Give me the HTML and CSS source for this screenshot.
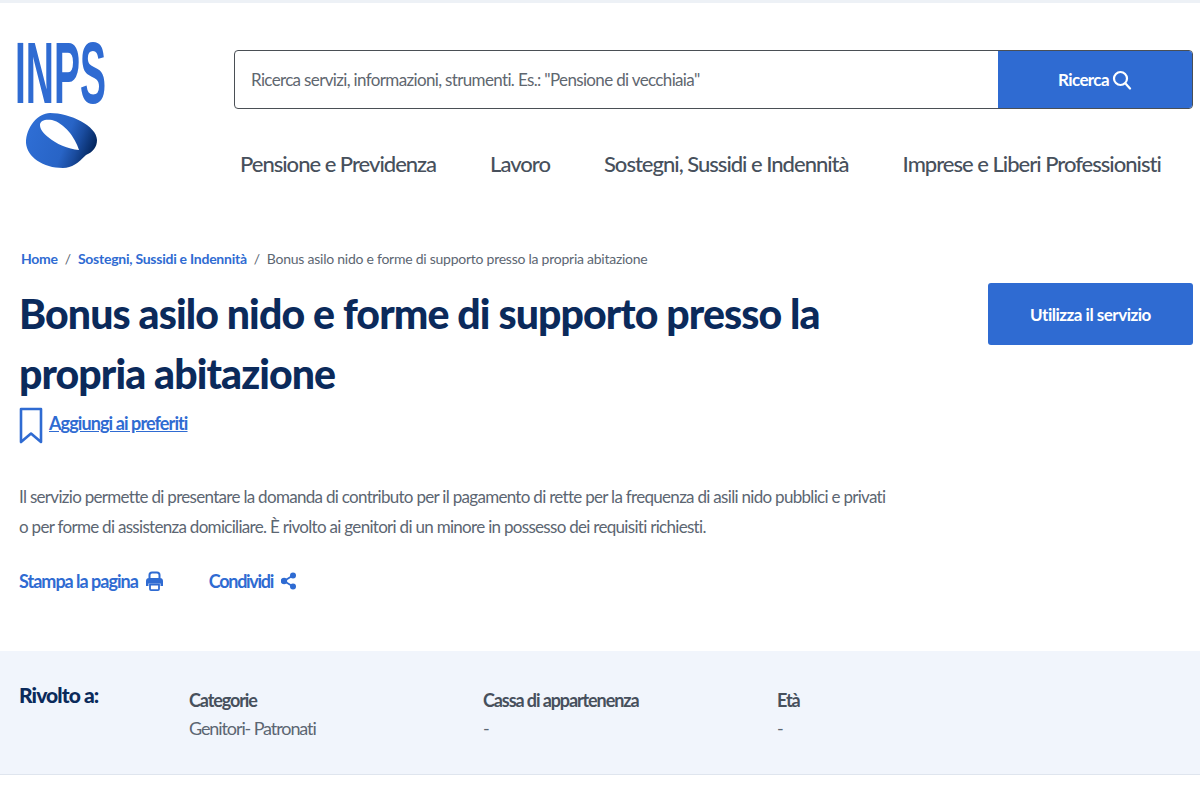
FILE: index.html
```html
<!DOCTYPE html>
<html lang="it">
<head>
    <meta charset="UTF-8">
    <title>Bonus asilo nido e forme di supporto presso la propria abitazione</title>
    <link rel="stylesheet" href="styles.css">
</head>
<body>

    <!-- Header -->
    <header class="header">
        <div class="logo">
            <svg class="logo-word" width="90" height="62" viewBox="0 0 90 62">
                <text x="-2" y="60" textLength="91" lengthAdjust="spacingAndGlyphs">INPS</text>
            </svg>
            <svg class="logo-mark" width="72" height="56" viewBox="0 0 72 56">
                <defs>
                    <linearGradient id="ringFill" x1="0" y1="0.2" x2="1" y2="0.5">
                        <stop offset="0" stop-color="#2f6fd6"/>
                        <stop offset="0.6" stop-color="#2864c6"/>
                        <stop offset="0.78" stop-color="#1a4c9f"/>
                        <stop offset="1" stop-color="#04275f"/>
                    </linearGradient>
                </defs>
                <path fill="url(#ringFill)" fill-rule="evenodd" d="M0 30C0 14 12 0 24 0C44 0 71 13 71 27C71 34 67 39 60 42C52 50 46 55 37 55C17 55 1 44 0 30ZM14 12C14 16 17 20 22 24C30 31 42 36 53 37C49 24 38 10 26 7C20 6 14 7 14 12Z"/>
            </svg>
        </div>
        <div class="header-main">
            <form class="search">
                <div class="search-input">Ricerca servizi, informazioni, strumenti. Es.: "Pensione di vecchiaia"</div>
                <div class="search-btn">
                    Ricerca
                    <svg width="20" height="20" viewBox="0 0 20 20" fill="none" stroke="#fff" stroke-width="2.2" stroke-linecap="round"><circle cx="8.500" cy="8.500" r="6.500"/><path d="M13.500 13.500L18 18.500"/></svg>
                </div>
            </form>
            <nav class="nav">
                <a>Pensione e Previdenza</a>
                <a>Lavoro</a>
                <a>Sostegni, Sussidi e Indennità</a>
                <a>Imprese e Liberi Professionisti</a>
            </nav>
        </div>
    </header>

    <!-- Page intro -->
    <main class="intro">
        <div class="breadcrumb">
            <a>Home</a><span class="sep">/</span><a>Sostegni, Sussidi e Indennità</a><span class="sep">/</span><span>Bonus asilo nido e forme di supporto presso la propria abitazione</span>
        </div>
        <div class="title-row">
            <h1>Bonus asilo nido e forme di supporto presso la propria abitazione</h1>
            <a class="use-btn">Utilizza il servizio</a>
        </div>
        <div class="favourite">
            <svg width="24" height="38" viewBox="0 0 24 38" fill="none" stroke="#2f6bd2" stroke-width="2.6" stroke-linejoin="round"><path d="M2 2H22V35L12 26.500L2 35Z"/></svg>
            <a>Aggiungi ai preferiti</a>
        </div>
        <p class="description">Il servizio permette di presentare la domanda di contributo per il pagamento di rette per la frequenza di asili nido pubblici e privati<br>o per forme di assistenza domiciliare. È rivolto ai genitori di un minore in possesso dei requisiti richiesti.</p>
        <div class="actions">
            <a>Stampa la pagina
                <svg width="17" height="21" viewBox="0 0 17 21" fill="#2f6bd2"><path d="M3.500 7V4C3.500 2.500 4.500 1.500 6 1.500H11C12.500 1.500 13.500 2.500 13.500 4V7" fill="none" stroke="#2f6bd2" stroke-width="2"/><path d="M3 7H14C15.800 7 17 8.200 17 10V15H14.500V12.500H2.500V15H0V10C0 8.200 1.200 7 3 7Z"/><path d="M4 13.500H13V18C13 18.800 12.500 19.200 12 19.200H5C4.500 19.200 4 18.800 4 18Z" fill="none" stroke="#2f6bd2" stroke-width="1.800"/></svg>
            </a>
            <a class="share">Condividi
                <svg width="15" height="18" viewBox="0 0 15 18" fill="#2f6bd2" stroke="#2f6bd2"><circle cx="12" cy="3.500" r="3" stroke="none"/><circle cx="3" cy="9" r="3.200" stroke="none"/><circle cx="12" cy="14.500" r="3" stroke="none"/><path d="M12 3.500L3 9L12 14.500" fill="none" stroke-width="1.800"/></svg>
            </a>
        </div>
    </main>

    <!-- Rivolto a -->
    <section class="audience">
        <h2>Rivolto a:</h2>
        <div class="audience-col col-cat">
            <strong>Categorie</strong>
            <span>Genitori- Patronati</span>
        </div>
        <div class="audience-col col-cassa">
            <strong>Cassa di appartenenza</strong>
            <span>-</span>
        </div>
        <div class="audience-col">
            <strong>Età</strong>
            <span>-</span>
        </div>
    </section>

</body>
</html>
```

FILE: styles.css
```css
/* General styles */
body {
    font-family: Lato, 'Noto Sans', sans-serif;
    background-color: #fff;
    color: #5c6672;
    margin: 0;
    height: 800px;
    overflow: hidden;
    border-top: 3px solid #edf1f6;
    box-sizing: border-box;
}

a {
    color: #2f6bd2;
}

/* Header */
.header {
    display: flex;
    padding: 40px 7px 0 17px;
}

.logo {
    width: 217px;
    display: flex;
    flex-direction: column;
}

.logo-word {
    font-family: 'Liberation Sans', sans-serif;
    font-size: 87px;
    font-weight: 700;
    fill: #2f6bd2;
    overflow: visible;
}

.logo-mark {
    margin: 8px 0 0 9px;
}

.header-main {
    flex: 1;
    padding-top: 7px;
}

.search {
    display: flex;
    height: 59px;
    box-sizing: border-box;
    border: 1px solid #4a4f55;
    border-radius: 4px;
    overflow: hidden;
}

.search-input {
    flex: 1;
    padding-left: 16px;
    line-height: 57px;
    font-size: 17px;
    letter-spacing: -0.65px;
    color: #5f6770;
}

.search-btn {
    width: 194px;
    background-color: #2f6bd2;
    color: #fff;
    font-size: 17px;
    font-weight: 700;
    letter-spacing: -0.6px;
    display: flex;
    justify-content: center;
    align-items: center;
    gap: 3px;
}

.nav {
    display: flex;
    gap: 54px;
    padding: 41px 0 0 6px;
    font-size: 22px;
    font-weight: 500;
    letter-spacing: -1px;
    white-space: nowrap;
}

.nav a {
    color: #47505c;
}

/* Intro */
.intro {
    padding: 73px 7px 0 19px;
}

.breadcrumb {
    font-size: 14px;
    letter-spacing: -0.25px;
    margin-left: 2px;
    color: #5c6672;
}

.breadcrumb a {
    font-weight: 700;
}

.sep {
    margin: 0 7px;
}

.title-row {
    display: flex;
    justify-content: space-between;
    align-items: flex-start;
    margin-top: 16px;
}

h1 {
    margin: 0;
    padding-top: 1px;
    width: 860px;
    font-size: 41px;
    line-height: 60px;
    font-weight: 900;
    letter-spacing: -0.9px;
    color: #0b2a5b;
}

.use-btn {
    width: 205px;
    height: 62px;
    background-color: #2f6bd2;
    border-radius: 3px;
    color: #fff;
    font-size: 17px;
    font-weight: 700;
    letter-spacing: -0.5px;
    display: flex;
    justify-content: center;
    align-items: center;
}

.favourite {
    display: flex;
    gap: 6px;
    align-items: flex-start;
    margin-top: 3px;
    font-size: 18px;
    font-weight: 700;
    letter-spacing: -0.9px;
}

.favourite a {
    padding-top: 5px;
    text-decoration: underline;
}

.description {
    margin: 37px 0 0;
    font-size: 17px;
    line-height: 30px;
    letter-spacing: -0.7px;
}

.actions {
    display: flex;
    gap: 46px;
    margin-top: 28px;
    font-size: 18px;
    font-weight: 700;
    letter-spacing: -1px;
}

.actions a {
    display: flex;
    align-items: center;
    gap: 8px;
}

.actions .share {
    letter-spacing: -1.3px;
}

/* Rivolto a */
.audience {
    display: flex;
    margin-top: 59px;
    height: 124px;
    box-sizing: border-box;
    padding: 31px 0 0 19px;
    background-color: #f1f5fc;
    border-bottom: 1px solid #dfe5ee;
}

h2 {
    margin: 0;
    width: 170px;
    font-size: 21px;
    font-weight: 900;
    letter-spacing: -0.9px;
    color: #0b2a5b;
}

.audience-col {
    display: flex;
    flex-direction: column;
    gap: 6px;
    padding-top: 7px;
    font-size: 18px;
    letter-spacing: -1.1px;
}

.col-cat {
    width: 294px;
}

.col-cassa {
    width: 294px;
}

.audience-col strong {
    color: #47505c;
}
```
